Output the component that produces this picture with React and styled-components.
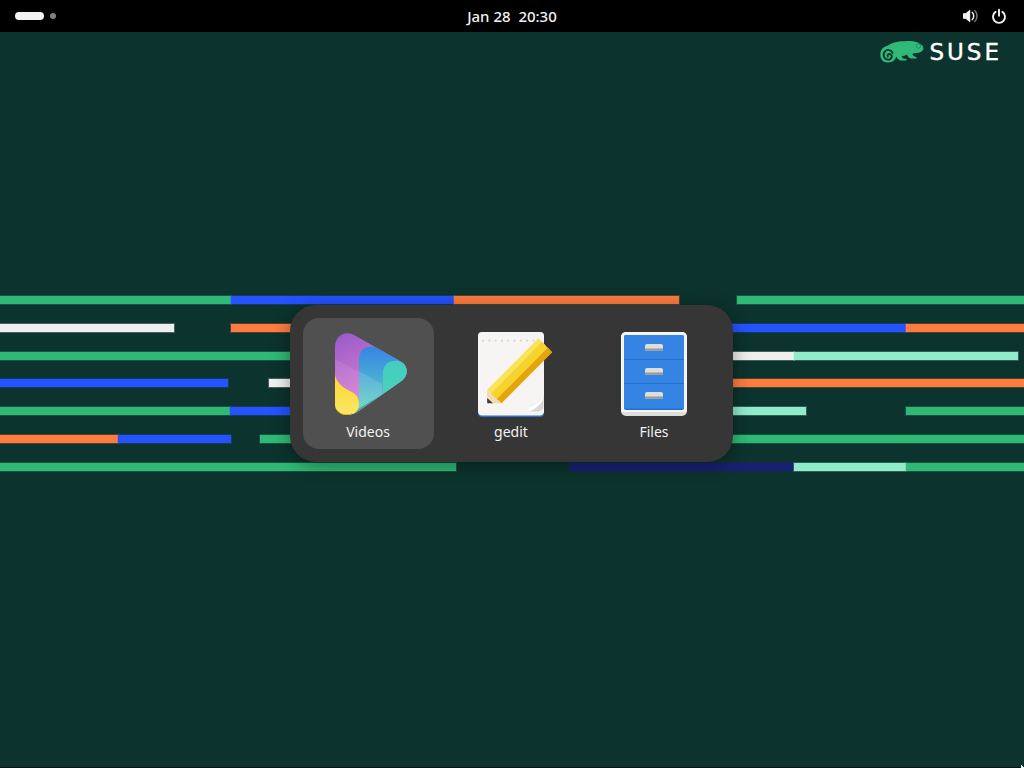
import React from 'react'
import styled, { createGlobalStyle } from 'styled-components'

const GlobalStyle = createGlobalStyle`
  html, body {
    margin: 0;
    height: 100%;
    overflow: hidden;
    background: #0c332d;
  }
`

const Screen = styled.div`
  position: relative;
  width: 1024px;
  height: 768px;
  display: flex;
  flex-direction: column;
  font-family: 'Noto Sans', sans-serif;
  color: #fff;
  overflow: hidden;
`
const TopBar = styled.header`
  height: 32px;
  flex: none;
  background: #000;
  display: grid;
  grid-template-columns: 1fr auto 1fr;
  align-items: center;
`
const Workspaces = styled.div`
  display: flex;
  align-items: center;
  gap: 6px;
  padding-left: 15px;
`
const ActivePill = styled.span`
  width: 29px;
  height: 8px;
  border-radius: 4px;
  background: #f2f2f2;
`
const WorkspaceDot = styled.span`
  width: 6px;
  height: 6px;
  border-radius: 50%;
  background: #808080;
`
const Clock = styled.div`
  font-size: 15px;
  font-weight: 500;
  white-space: pre;
  color: #f2f2f2;
`
const Tray = styled.div`
  display: flex;
  justify-content: flex-end;
  align-items: center;
  gap: 13px;
  padding-right: 17px;
  svg {
    display: block;
  }
`
const Desktop = styled.main`
  flex: 1;
  background: #0c332d;
  border-bottom: 1px solid #04130f;
`
const LogoRow = styled.div`
  height: 264px;
  box-sizing: border-box;
  display: flex;
  justify-content: flex-end;
  align-items: flex-start;
  gap: 5px;
  padding: 9px 22px 0 0;
  svg {
    display: block;
  }
`
const Wordmark = styled.span`
  font-family: 'DejaVu Sans', sans-serif;
  font-size: 23px;
  line-height: 22px;
  font-weight: 400;
  letter-spacing: 3px;
  color: #fff;
  -webkit-text-stroke: 0.4px #fff;
`
const Stripes = styled.div`
  display: flex;
  flex-direction: column;
  gap: 19.8px;
`
const StripeRow = styled.div`
  display: flex;
  height: 8px;
`
const Segment = styled.span`
  flex: none;
  width: ${p => p.$w}px;
  background: ${p => p.$c || 'transparent'};
  box-shadow: ${p => (p.$c ? `0 0 0 1px ${p.$c}40` : 'none')};
`
const Overlay = styled.div`
  position: absolute;
  inset: 0 1px 1px 0;
  display: flex;
  align-items: center;
  justify-content: center;
`
const Switcher = styled.div`
  display: flex;
  gap: 12px;
  padding: 13px;
  background: #363636;
  border-radius: 26px;
  box-shadow: 0 3px 18px rgba(0, 0, 0, 0.38);
`
const AppTile = styled.div`
  width: 131px;
  height: 131px;
  box-sizing: border-box;
  padding-top: 8px;
  border-radius: 16px;
  background: ${p => (p.$active ? '#505050' : 'transparent')};
  display: flex;
  flex-direction: column;
  align-items: center;
  svg {
    display: block;
    margin-right: 1px;
  }
`
const AppLabel = styled.div`
  font-size: 14px;
  line-height: 20px;
  margin-right: 1px;
  color: #f2f2f2;
`
const Cursor = styled.svg`
  position: absolute;
  right: 0;
  bottom: 0;
`

const GREEN = '#2fb975'
const BLUE = '#2453ff'
const ORANGE = '#fe7c3f'
const WHITE = '#efefef'
const MINT = '#90ebcd'
const NAVY = '#192072'

const rows = [
  [[230.5, GREEN], [223.5, BLUE], [225, ORANGE], [58], [287, GREEN]],
  [[174, WHITE], [57], [224, ORANGE], [225], [226, BLUE], [118, ORANGE]],
  [[570, GREEN], [224, WHITE], [224, MINT]],
  [[228, BLUE], [41], [225, WHITE], [530, ORANGE]],
  [[230, GREEN], [226, BLUE], [350, MINT], [100], [118, GREEN]],
  [[118, ORANGE], [113, BLUE], [29], [764, GREEN]],
  [[456, GREEN], [114], [224, NAVY], [112, MINT], [118, GREEN]],
]

const VolumeIcon = () => (
  <svg width="16" height="16" viewBox="0 0 16 16">
    <path d="M1 5.300h2.600L8.200 1.600v12.800L3.600 10.700H1z" fill="#f2f2f2" />
    <path d="M10.200 4.200c2 2 2 5.600 0 7.600" fill="none" stroke="#f2f2f2" strokeWidth="1.500" strokeLinecap="round" />
    <path d="M12.800 2.500c3 3 3 8 0 11" fill="none" stroke="#777" strokeWidth="1.500" strokeLinecap="round" />
  </svg>
)

const PowerIcon = () => (
  <svg width="16" height="16" viewBox="0 0 16 16" fill="none" stroke="#f2f2f2" strokeWidth="1.900" strokeLinecap="round">
    <path d="M8 1.800v6" />
    <path d="M4.600 3.900a6 6 0 1 0 6.800 0" />
  </svg>
)

const Chameleon = () => (
  <svg width="44" height="22" viewBox="0 0 44 22">
    <path
      d="M0.300 13.500C0.300 8.500 3.500 5.500 8 4.500 12 1.500 19 -0.200 26 0.300 31 -0.300 37 0.500 40 3 43 4 44 7 43 9 41.500 11.500 38 12 35 12L32.500 12.800C32.500 14.500 34 15.500 36.500 16V17.500H31C29 17 27.500 15.500 27 13.500 25 14.500 23 15 21.500 15L23 17.500 26.500 18V19.500H20.500C18.500 19 17.300 17.500 16.300 15.500 15.500 18.500 13 21.500 8 21.500 3 21.500 0.300 18 0.300 13.500z"
      fill="#30ba78"
    />
    <path
      d="M12.600 12C11.500 8.800 7.300 8 5 10.300 2.300 13 3.800 18.600 8.200 18.600 11.800 18.600 13 14.500 10.300 13.200 8.500 12.500 7 14 7.800 15.500"
      fill="none"
      stroke="#0c332d"
      strokeWidth="1.800"
      strokeLinecap="round"
    />
    <circle cx="38.500" cy="5" r="2.200" fill="none" stroke="#1d8a58" strokeWidth="0.800" />
  </svg>
)

const VideosIcon = () => (
  <svg width="96" height="96" viewBox="0 0 96 96">
    <defs>
      <linearGradient id="vidPurple" x1="0" y1="0" x2="0.4" y2="1">
        <stop offset="0" stopColor="#8f55c6" />
        <stop offset="0.75" stopColor="#d47ed4" />
      </linearGradient>
      <linearGradient id="vidBlue" x1="0" y1="0" x2="0" y2="1">
        <stop offset="0" stopColor="#3584e4" />
        <stop offset="0.8" stopColor="#5fd0c4" />
      </linearGradient>
      <linearGradient id="vidYellow" x1="0" y1="0" x2="0" y2="1">
        <stop offset="0" stopColor="#fbd62e" />
        <stop offset="1" stopColor="#fbe96a" />
      </linearGradient>
      <linearGradient id="vidTeal" x1="0" y1="0" x2="0" y2="1">
        <stop offset="0" stopColor="#44ccc0" />
        <stop offset="1" stopColor="#4fd8b8" />
      </linearGradient>
      <clipPath id="vidShape">
        <path d="M15 21C15 10 25 3.500 35 9.500L80 35C89 40 89 50 80 56L38 85.500C28 92 15 89 15 78z" />
      </clipPath>
    </defs>
    <g clipPath="url(#vidShape)">
      <rect x="10" y="0" width="80" height="96" fill="url(#vidPurple)" />
      <path d="M15 33L62 59V96H15z" fill="#fff" opacity="0.08" />
      <path d="M39 34C39 22 49 17 59 23L90 40V96H39z" fill="url(#vidBlue)" />
      <path d="M39 45L62 58V70L39 86z" fill="#fff" opacity="0.12" />
      <path d="M63 47C63 37 71 34 78 35L92 40V96H63z" fill="url(#vidTeal)" />
      <path d="M15 49C17 58 25 63 32 66 37 69 39 72 39 79 39 86 34 92 26 92L10 92V49z" fill="url(#vidYellow)" />
      <path d="M33 89L39 82.500 87 53.500 87 56 38 87z" fill="#2f9c94" opacity="0.8" />
      <path d="M15 80C18 88 26 90 33 87L26 93 12 91z" fill="#d4a900" />
    </g>
  </svg>
)

const dots = [0, 1, 2, 3, 4, 5, 6, 7, 8]

const GeditIcon = () => (
  <svg width="96" height="96" viewBox="0 0 96 96">
    <rect x="15" y="6" width="66" height="85" rx="4" fill="#2f6fc0" />
    <path d="M15 10a4 4 0 0 1 4-4h58a4 4 0 0 1 4 4v75a4 4 0 0 1-4 4.500H19a4 4 0 0 1-4-4.500z" fill="#f6f5f4" />
    {dots.map(i => (
      <circle key={i} cx={20 + i * 6.3} cy="14.700" r="1.100" fill="#d8d7d4" />
    ))}
    <path d="M66 85.500L66 80C72 79 77 75 80.500 71V80C80.500 83 78 85.500 75 85.500z" fill="#d8d7d4" />
    <path d="M66 80.500C72 79.500 77 75 80.500 71 80 75 78 78 75 80 72 83 69 84.500 66 85.500z" fill="#fff" />
    <path d="M24 64L38.500 77.300 24.300 77.300z" fill="#f0dcb4" />
    <path d="M24.100 72L30 77.300 24.300 77.300z" fill="#3d3846" />
    <path d="M24 64L75.300 12.300 82 19 31 70.500z" fill="#f9e45c" />
    <path d="M28 67.700L79 15.800 85.500 22.500 34.500 74z" fill="#f6d32d" />
    <path d="M34 73L85 21.500 89.300 26.300 38.500 77.300z" fill="#e5a50a" />
  </svg>
)

const handles = [18, 42, 66]

const FilesIcon = () => (
  <svg width="96" height="96" viewBox="0 0 96 96">
    <rect x="15" y="6" width="66" height="84" rx="5" fill="#deddda" />
    <path d="M15 11a5 5 0 0 1 5-5h56a5 5 0 0 1 5 5v73a2 2 0 0 1-2 2H17a2 2 0 0 1-2-2z" fill="#f6f5f4" />
    <rect x="18" y="9" width="60" height="75" rx="2" fill="#1c71d8" />
    <path d="M18 11a2 2 0 0 1 2-2h56a2 2 0 0 1 2 2v71.500H18z" fill="#3584e4" />
    <rect x="18" y="33" width="60" height="1" fill="#1c71d8" />
    <rect x="18" y="57" width="60" height="1" fill="#1c71d8" />
    {handles.map(y => (
      <g key={y}>
        <path d={`M39 ${y + 6.500}v-4.500a2 2 0 0 1 2-2h14a2 2 0 0 1 2 2v4.500z`} fill="#deddda" />
        <rect x="39" y={y + 4.500} width="18" height="2" fill="#9a9996" />
      </g>
    ))}
  </svg>
)

const apps = [
  { name: 'Videos', Icon: VideosIcon, active: true },
  { name: 'gedit', Icon: GeditIcon },
  { name: 'Files', Icon: FilesIcon },
]

export default function App() {
  return (
    <Screen>
      <GlobalStyle />
      <TopBar>
        <Workspaces>
          <ActivePill />
          <WorkspaceDot />
        </Workspaces>
        <Clock>{'Jan 28  20:30'}</Clock>
        <Tray>
          <VolumeIcon />
          <PowerIcon />
        </Tray>
      </TopBar>
      <Desktop>
        <LogoRow>
          <Chameleon />
          <Wordmark>SUSE</Wordmark>
        </LogoRow>
        <Stripes>
          {rows.map((row, i) => (
            <StripeRow key={i}>
              {row.map(([w, c], j) => (
                <Segment key={j} $w={w} $c={c} />
              ))}
            </StripeRow>
          ))}
        </Stripes>
      </Desktop>
      <Overlay>
        <Switcher>
          {apps.map(({ name, Icon, active }) => (
            <AppTile key={name} $active={active}>
              <Icon />
              <AppLabel>{name}</AppLabel>
            </AppTile>
          ))}
        </Switcher>
      </Overlay>
      <Cursor width="3" height="3" viewBox="0 0 3 3">
        <path d="M0 0h1v1h1v1h1v1H0z" fill="#fff" />
      </Cursor>
    </Screen>
  )
}
